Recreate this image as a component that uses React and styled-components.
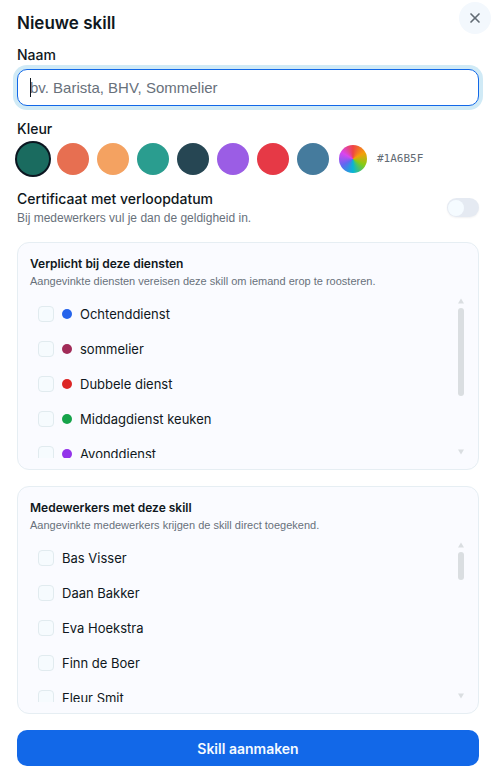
import React, { useState } from "react";
import styled, { createGlobalStyle } from "styled-components";
import { X } from "lucide-react";

const GlobalStyle = createGlobalStyle`
    * { box-sizing: border-box; }
    body { margin: 0; background: #fff; color: #0f1720; font-family: "Liberation Sans", Arial, sans-serif; font-size: 14px; line-height: 20px; }
    button, input { font-family: inherit; }
    h2, h3, p { margin: 0; }
`;

const uiFont = 'Inter, "Liberation Sans", sans-serif';

const Form = styled.form`
    position: relative;
    display: flex;
    flex-direction: column;
    padding: 12px 15px 17px 17px;
`;

const Title = styled.h2`
    font-family: ${uiFont};
    font-size: 17px;
    line-height: 22px;
    font-weight: 600;
`;

const CloseButton = styled.button`
    position: absolute;
    top: 2px;
    right: 3px;
    display: flex;
    align-items: center;
    justify-content: center;
    width: 32px;
    height: 32px;
    padding: 0;
    border: 0;
    border-radius: 50%;
    background: #f3f8fd;
    color: #626b74;
    cursor: pointer;
`;

const Field = styled.div`
    display: flex;
    flex-direction: column;
    gap: 4px;
    margin-top: ${({ $first }) => ($first ? "11px" : "13px")};
`;

const FieldLabel = styled.label`
    font-family: ${uiFont};
    font-size: 14px;
    line-height: 20px;
    font-weight: 500;
`;

const InputWrap = styled.div`
    position: relative;

    /* caret on the empty, focused field */
    &:focus-within:has(input:placeholder-shown)::after {
        content: "";
        position: absolute;
        top: 9px;
        left: 13px;
        width: 1px;
        height: 19px;
        background: #0f1720;
        pointer-events: none;
    }
`;

const NameInput = styled.input`
    display: block;
    width: 100%;
    height: 37px;
    padding: 0 12px;
    border: 1px solid #dfe7ec;
    border-radius: 10px;
    background: #fff;
    color: #0f1720;
    font-size: 15px;
    outline: 0;

    &::placeholder { color: #68717b; opacity: 1; }
    &:placeholder-shown { caret-color: transparent; }
    &:focus { border-color: #1268e8; box-shadow: 0 0 0 4px #d0eaf6; }
`;

const SwatchRow = styled.div`
    display: flex;
    align-items: center;
    gap: 8px;
`;

const Swatch = styled.button`
    width: 32px;
    height: 32px;
    padding: 0;
    border: 0;
    border-radius: 50%;
    background: ${({ $color }) => $color};
    box-shadow: ${({ $active }) => ($active ? "0 0 0 2px #0b1620" : "none")};
    cursor: pointer;
`;

const CustomColor = styled.label`
    position: relative;
    width: 28px;
    height: 28px;
    margin: 0 2px;
    border-radius: 50%;
    background: conic-gradient(#ef4444, #f59e0b, #84cc16, #06b6d4, #6366f1, #d946ef, #ef4444);
    overflow: hidden;
    cursor: pointer;

    input { position: absolute; inset: 0; width: 100%; height: 100%; opacity: 0; cursor: pointer; }
`;

const HexCode = styled.span`
    color: #626b74;
    font-family: "DejaVu Sans Mono", "Liberation Mono", monospace;
    font-size: 11px;
    line-height: 16px;
    text-transform: uppercase;
`;

const SwitchRow = styled.div`
    display: flex;
    align-items: center;
    justify-content: space-between;
    margin-top: 14px;
`;

const SwitchText = styled.div`
    display: flex;
    flex-direction: column;
    gap: 1px;
`;

const Hint = styled.p`
    color: #68717b;
    font-size: ${({ $small }) => ($small ? "11px" : "12px")};
    line-height: 16px;
`;

const Switch = styled.input`
    appearance: none;
    display: flex;
    align-items: center;
    width: 32px;
    height: 19px;
    margin: 0;
    padding: 1px;
    border-radius: 10px;
    background: #e5eaf2;
    box-shadow: 0 1px 2px rgba(15, 23, 32, 0.06);
    cursor: pointer;

    &::before { content: ""; width: 16px; height: 16px; border-radius: 50%; background: #f5fbff; }
    &:checked { justify-content: flex-end; background: #1268e8; }
`;

const Card = styled.section`
    margin-top: 16px;
    padding: 11px 12px;
    border: 1px solid #e6eef3;
    border-radius: 12px;
    background: #fafbff;
`;

const CardTitle = styled.h3`
    font-family: ${uiFont};
    font-size: 12px;
    line-height: 19px;
    font-weight: 600;
`;

const ScrollArea = styled.div`
    display: flex;
    height: 163px;
    margin-top: 6px;
`;

const OptionList = styled.ul`
    flex: 1;
    margin: 0;
    padding: 1px 0 0;
    list-style: none;
    overflow-y: auto;
    scrollbar-width: none;
`;

const Option = styled.label`
    display: flex;
    align-items: center;
    gap: 8px;
    height: 35px;
    padding: 0 8px;
    font-family: ${uiFont};
    font-size: 13px;
    cursor: pointer;
`;

const CheckBox = styled.input`
    appearance: none;
    width: 16px;
    height: 16px;
    margin: 0;
    border: 1px solid #e1ebef;
    border-radius: 4px;
    background: #f6fbfe;

    &:checked { border-color: #1268e8; background: #1268e8; }
`;

const Dot = styled.span`
    width: 10px;
    height: 10px;
    border-radius: 50%;
    background: ${({ $color }) => $color};
`;

const Rail = styled.div`
    display: flex;
    flex-direction: column;
    align-items: center;
    width: 10px;
    padding: 3px 2px;
    color: #dadee1;

    svg:last-child { margin-top: auto; }
`;

const Thumb = styled.div`
    width: 6px;
    height: ${({ $size }) => $size}px;
    margin-top: 4px;
    border-radius: 3px;
    background: #dadee1;
`;

const SubmitButton = styled.button`
    height: 36px;
    margin-top: 16px;
    border: 0;
    border-radius: 10px;
    background: #1268e8;
    color: #f5fbff;
    font-family: ${uiFont};
    font-size: 14px;
    font-weight: 600;
    cursor: pointer;
`;

const colors = ["#1A6B5F", "#E76F51", "#F4A261", "#2A9D8F", "#264653", "#9B5DE5", "#E63946", "#457B9D"];

const shifts = [
    { name: "Ochtenddienst", color: "#2563eb" },
    { name: "sommelier", color: "#a12b58" },
    { name: "Dubbele dienst", color: "#dc2626" },
    { name: "Middagdienst keuken", color: "#16a34a" },
    { name: "Avonddienst", color: "#9333ea" },
];

const employees = [
    { name: "Bas Visser" },
    { name: "Daan Bakker" },
    { name: "Eva Hoekstra" },
    { name: "Finn de Boer" },
    { name: "Fleur Smit" },
];

const OptionCard = ({ title, hint, items, thumb }) => (
    <Card>
        <CardTitle>{title}</CardTitle>
        <Hint $small>{hint}</Hint>
        <ScrollArea>
            <OptionList>
                {items.map(({ name, color }) => (
                    <li key={name}>
                        <Option>
                            <CheckBox type="checkbox" />
                            {color && <Dot $color={color} />}
                            {name}
                        </Option>
                    </li>
                ))}
            </OptionList>
            <Rail aria-hidden="true">
                <svg width="6" height="6" viewBox="0 0 6 6"><path d="M3 0.5 6 5.5H0Z" fill="currentColor" /></svg>
                <Thumb $size={thumb} />
                <svg width="6" height="6" viewBox="0 0 6 6"><path d="M3 5.5 6 0.5H0Z" fill="currentColor" /></svg>
            </Rail>
        </ScrollArea>
    </Card>
);

const App = () => {
    const [name, setName] = useState("");
    const [color, setColor] = useState(colors[0]);

    return (
        <>
            <GlobalStyle />
            <Form onSubmit={(e) => e.preventDefault()}>
                <Title>Nieuwe skill</Title>
                <CloseButton type="button" aria-label="Sluiten">
                    <X size={16} strokeWidth={2.5} />
                </CloseButton>

                <Field $first>
                    <FieldLabel htmlFor="name">Naam</FieldLabel>
                    <InputWrap>
                        <NameInput
                            id="name"
                            autoFocus
                            autoComplete="off"
                            placeholder="bv. Barista, BHV, Sommelier"
                            value={name}
                            onChange={(e) => setName(e.target.value)}
                        />
                    </InputWrap>
                </Field>

                <Field>
                    <FieldLabel as="span" id="color-label">Kleur</FieldLabel>
                    <SwatchRow role="group" aria-labelledby="color-label">
                        {colors.map((c) => (
                            <Swatch
                                key={c}
                                type="button"
                                aria-label={c}
                                $color={c}
                                $active={c === color}
                                onClick={() => setColor(c)}
                            />
                        ))}
                        <CustomColor>
                            <input type="color" aria-label="Kleur" value={color} onChange={(e) => setColor(e.target.value)} />
                        </CustomColor>
                        <HexCode>{color}</HexCode>
                    </SwatchRow>
                </Field>

                <SwitchRow>
                    <SwitchText>
                        <FieldLabel htmlFor="expires">Certificaat met verloopdatum</FieldLabel>
                        <Hint>Bij medewerkers vul je dan de geldigheid in.</Hint>
                    </SwitchText>
                    <Switch id="expires" type="checkbox" role="switch" />
                </SwitchRow>

                <OptionCard
                    title="Verplicht bij deze diensten"
                    hint="Aangevinkte diensten vereisen deze skill om iemand erop te roosteren."
                    items={shifts}
                    thumb={88}
                />
                <OptionCard
                    title="Medewerkers met deze skill"
                    hint="Aangevinkte medewerkers krijgen de skill direct toegekend."
                    items={employees}
                    thumb={28}
                />

                <SubmitButton type="submit">Skill aanmaken</SubmitButton>
            </Form>
        </>
    );
};

export default App;
